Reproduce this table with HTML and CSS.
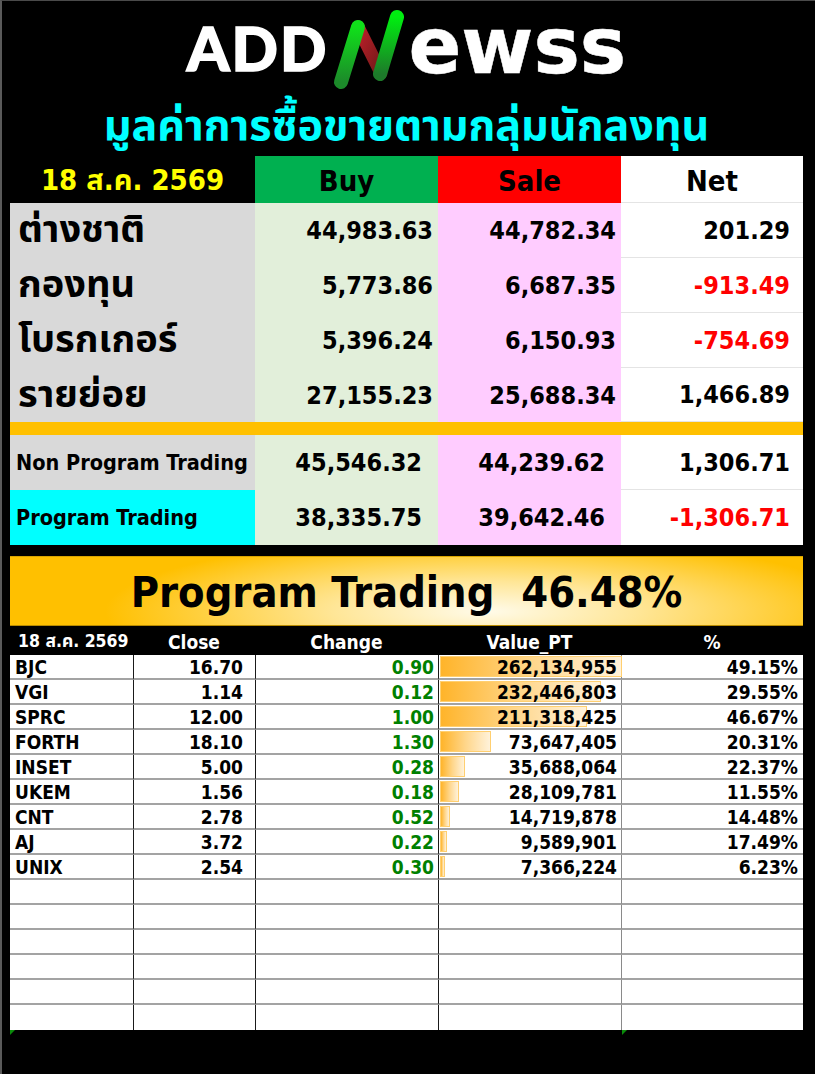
FILE: index.html
```html
<!DOCTYPE html>
<html lang="th">
<head>
<meta charset="utf-8">
<title>ADDNewss - มูลค่าการซื้อขายตามกลุ่มนักลงทุน</title>
<link rel="stylesheet" href="styles.css">
</head>
<body>
<div class="page">
  <header class="logo">
    <span class="logo-a">ADD</span>
    <svg class="logo-n" width="76" height="84" viewBox="0 0 76 84" aria-hidden="true">
      <defs>
        <linearGradient id="gl" x1="0" y1="1" x2="0" y2="0">
          <stop offset="0" stop-color="#1c8a2a"/>
          <stop offset="1" stop-color="#10e01a"/>
        </linearGradient>
        <linearGradient id="gr" x1="0" y1="1" x2="0" y2="0">
          <stop offset="0" stop-color="#1d7a2a"/>
          <stop offset="1" stop-color="#00ee10"/>
        </linearGradient>
        <linearGradient id="rd" x1="0" y1="0" x2="1" y2="1">
          <stop offset="0" stop-color="#c0202a"/>
          <stop offset="1" stop-color="#6e1818"/>
        </linearGradient>
      </defs>
      <path d="M30 20 L53 66" stroke="url(#rd)" stroke-width="13" stroke-linecap="round" fill="none"/>
      <path d="M13 75 L30 20" stroke="url(#gl)" stroke-width="14" stroke-linecap="round" fill="none"/>
      <path d="M52 67 L69 10" stroke="url(#gr)" stroke-width="14" stroke-linecap="round" fill="none"/>
    </svg>
    <span class="logo-b">ewss</span>
  </header>

  <h1 class="title">มูลค่าการซื้อขายตามกลุ่มนักลงทุน</h1>

  <section class="flow">
    <div class="c hd-date">18 ส.ค. 2569</div>
    <div class="c hd hd-buy">Buy</div>
    <div class="c hd hd-sale">Sale</div>
    <div class="c hd hd-net">Net</div>

    <div class="c lab">ต่างชาติ</div>
    <div class="c num buy">44,983.63</div>
    <div class="c num sale">44,782.34</div>
    <div class="c num net">201.29</div>

    <div class="c lab">กองทุน</div>
    <div class="c num buy">5,773.86</div>
    <div class="c num sale">6,687.35</div>
    <div class="c num net neg">-913.49</div>

    <div class="c lab">โบรกเกอร์</div>
    <div class="c num buy">5,396.24</div>
    <div class="c num sale">6,150.93</div>
    <div class="c num net neg">-754.69</div>

    <div class="c lab">รายย่อย</div>
    <div class="c num buy">27,155.23</div>
    <div class="c num sale">25,688.34</div>
    <div class="c num net">1,466.89</div>

    <div class="gold"></div>

    <div class="c lab lab-en">Non Program Trading</div>
    <div class="c num buy pad">45,546.32</div>
    <div class="c num sale pad">44,239.62</div>
    <div class="c num net">1,306.71</div>

    <div class="c lab lab-en cyan">Program Trading</div>
    <div class="c num buy pad">38,335.75</div>
    <div class="c num sale pad">39,642.46</div>
    <div class="c num net neg last">-1,306.71</div>
  </section>

  <div class="banner">Program Trading&nbsp; 46.48%</div>

  <section class="pt">
    <div class="pt-head">
      <div class="ph ph-date">18 ส.ค. 2569</div>
      <div class="ph">Close</div>
      <div class="ph">Change</div>
      <div class="ph">Value_PT</div>
      <div class="ph">%</div>
    </div>

    <div class="pt-row"><div class="sym">BJC</div><div class="cl">16.70</div><div class="ch">0.90</div><div class="val"><span class="bar" style="width:100%"></span><span class="vt">262,134,955</span></div><div class="pc">49.15%</div></div>
    <div class="pt-row"><div class="sym">VGI</div><div class="cl">1.14</div><div class="ch">0.12</div><div class="val"><span class="bar" style="width:88.7%"></span><span class="vt">232,446,803</span></div><div class="pc">29.55%</div></div>
    <div class="pt-row"><div class="sym">SPRC</div><div class="cl">12.00</div><div class="ch">1.00</div><div class="val"><span class="bar" style="width:80.6%"></span><span class="vt">211,318,425</span></div><div class="pc">46.67%</div></div>
    <div class="pt-row"><div class="sym">FORTH</div><div class="cl">18.10</div><div class="ch">1.30</div><div class="val"><span class="bar" style="width:28.1%"></span><span class="vt">73,647,405</span></div><div class="pc">20.31%</div></div>
    <div class="pt-row"><div class="sym">INSET</div><div class="cl">5.00</div><div class="ch">0.28</div><div class="val"><span class="bar" style="width:13.6%"></span><span class="vt">35,688,064</span></div><div class="pc">22.37%</div></div>
    <div class="pt-row"><div class="sym">UKEM</div><div class="cl">1.56</div><div class="ch">0.18</div><div class="val"><span class="bar" style="width:10.7%"></span><span class="vt">28,109,781</span></div><div class="pc">11.55%</div></div>
    <div class="pt-row"><div class="sym">CNT</div><div class="cl">2.78</div><div class="ch">0.52</div><div class="val"><span class="bar" style="width:5.6%"></span><span class="vt">14,719,878</span></div><div class="pc">14.48%</div></div>
    <div class="pt-row"><div class="sym">AJ</div><div class="cl">3.72</div><div class="ch">0.22</div><div class="val"><span class="bar" style="width:3.7%"></span><span class="vt">9,589,901</span></div><div class="pc">17.49%</div></div>
    <div class="pt-row"><div class="sym">UNIX</div><div class="cl">2.54</div><div class="ch">0.30</div><div class="val"><span class="bar" style="width:2.8%"></span><span class="vt">7,366,224</span></div><div class="pc">6.23%</div></div>

    <div class="pt-row"><div class="sym"></div><div class="cl"></div><div class="ch"></div><div class="val"></div><div class="pc"></div></div>
    <div class="pt-row"><div class="sym"></div><div class="cl"></div><div class="ch"></div><div class="val"></div><div class="pc"></div></div>
    <div class="pt-row"><div class="sym"></div><div class="cl"></div><div class="ch"></div><div class="val"></div><div class="pc"></div></div>
    <div class="pt-row"><div class="sym"></div><div class="cl"></div><div class="ch"></div><div class="val"></div><div class="pc"></div></div>
    <div class="pt-row"><div class="sym"></div><div class="cl"></div><div class="ch"></div><div class="val"></div><div class="pc"></div></div>
    <div class="pt-row last-row"><div class="sym mark"></div><div class="cl"></div><div class="ch"></div><div class="val"></div><div class="pc mark"></div></div>
  </section>
</div>
</body>
</html>
```

FILE: styles.css
```css
html, body {
  margin: 0;
  padding: 0;
  background: #000;
}

.page {
  box-sizing: border-box;
  width: 815px;
  height: 1074px;
  background: #000;
  border-top: 1px solid #4a4a4a;
  border-left: 2px solid #5a5a5a;
  padding-left: 8px;
  font-family: "DejaVu Sans Condensed", "DejaVu Sans", "Noto Sans Thai", "Tahoma", "Loma", "Garuda", "Waree", "Sawasdee", "Noto Sans", sans-serif;
  font-stretch: condensed;
  font-weight: bold;
  color: #000;
}

/* ---------- logo ---------- */
.logo {
  width: 793px;
  height: 95px;
  display: flex;
  justify-content: center;
  align-items: center;
  color: #fff;
  font-family: "Lato", "Open Sans", sans-serif;
  font-stretch: normal;
  font-weight: 900;
  -webkit-text-stroke: 1.5px #fff;
}

.logo-a {
  font-size: 61px;
  line-height: 78px;
  letter-spacing: 2px;
  margin-bottom: 2px;
}

.logo-n {
  display: block;
  margin: 0 4px 0 0;
}

.logo-b {
  font-family: "DejaVu Sans", "Lato", sans-serif;
  font-weight: bold;
  font-size: 78px;
  line-height: 78px;
  letter-spacing: 0;
  -webkit-text-stroke: 0.5px #fff;
  align-self: flex-start;
  margin-top: 6px;
}

/* ---------- title ---------- */
.title {
  margin: 0;
  width: 793px;
  height: 60px;
  line-height: 58px;
  text-align: center;
  color: #00ffff;
  font-size: 43px;
  font-weight: bold;
}

/* ---------- flow table ---------- */
.flow {
  display: grid;
  grid-template-columns: 245px 183px 183px 182px;
  grid-template-rows: 47px 55px 55px 55px 54px 13px 55px 55px;
}

.c {
  box-sizing: border-box;
  display: flex;
  align-items: center;
  white-space: nowrap;
}

.hd-date {
  justify-content: center;
  color: #ffff00;
  font-size: 29px;
  padding-top: 3px;
}

.hd {
  justify-content: center;
  font-size: 29px;
  padding-top: 3px;
}

.hd-buy { background: #00b050; }
.hd-sale { background: #ff0000; }
.hd-net { background: #ffffff; border-bottom: 1px solid #e4e4e4; }

.lab {
  background: #d9d9d9;
  padding-left: 8px;
  font-size: 38px;
}

.lab-en {
  font-size: 21.5px;
  padding-left: 6px;
}

.cyan { background: #00ffff; }

.num {
  justify-content: flex-end;
  padding-right: 5px;
  font-size: 25px;
}

.num.pad { padding-right: 16px; }

.buy { background: #e2efda; }
.sale { background: #ffccff; }
.net {
  background: #ffffff;
  padding-right: 13px;
  border-bottom: 1px solid #e4e4e4;
}
.net.last { border-bottom: none; }

.neg { color: #ff0000; }

.gold {
  grid-column: 1 / -1;
  background: #ffc000;
}

/* ---------- banner ---------- */
.banner {
  box-sizing: border-box;
  width: 793px;
  height: 70px;
  margin-top: 11px;
  display: flex;
  align-items: center;
  justify-content: center;
  font-size: 43px;
  padding-top: 2px;
  border-top: 1px solid #d9a400;
  border-bottom: 1px solid #b88a00;
  background: radial-gradient(ellipse 48% 110% at 60% 80%, #fffbea 0%, #ffe697 40%, #ffc000 100%);
}

/* ---------- program trading table ---------- */
.pt {
  width: 793px;
}

.pt-head,
.pt-row {
  display: grid;
  grid-template-columns: 123px 122px 183px 183px 182px;
}

.pt-head {
  height: 29px;
  color: #fff;
  font-size: 19px;
}

.ph {
  display: flex;
  align-items: center;
  justify-content: center;
  padding-top: 2px;
}

.ph-date {
  justify-content: flex-start;
  padding-left: 8px;
  font-size: 17.5px;
}

.pt-row {
  height: 25px;
  background: #fff;
  font-size: 19px;
}

.pt-row > div {
  box-sizing: border-box;
  display: flex;
  align-items: center;
  justify-content: flex-end;
  border-bottom: 2px solid #a3a3a3;
  border-left: 1px solid #1a1a1a;
  white-space: nowrap;
}

.pt-row.last-row > div { border-bottom: none; }

.pt-row > .sym {
  justify-content: flex-start;
  padding-left: 5px;
  border-left: none;
}

.pt-row > .cl { padding-right: 12px; }
.pt-row > .ch { padding-right: 4px; color: #008000; }
.pt-row > .val { padding-right: 4px; position: relative; }
.pt-row > .pc { padding-right: 5px; border-left-color: #8a8a8a; }

.pt-row > .mark { position: relative; }
.pt-row > .mark::after {
  content: "";
  position: absolute;
  left: 0;
  bottom: -5px;
  width: 0;
  height: 0;
  border-top: 5px solid #0a8a0a;
  border-right: 5px solid transparent;
}

.bar {
  position: absolute;
  left: 1px;
  top: 1px;
  bottom: 1px;
  box-sizing: border-box;
  border: 1px solid #ffcf70;
  background: linear-gradient(to right, #ffb42a 0%, #ffd68a 50%, #fff2da 100%);
}

.vt {
  position: relative;
}
```
